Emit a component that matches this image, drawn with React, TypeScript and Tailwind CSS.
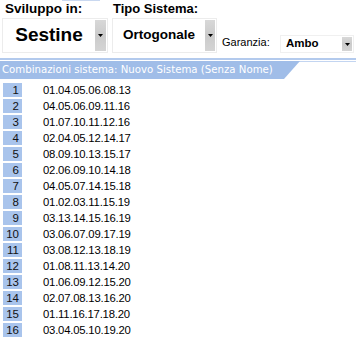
import React from "react";

const rows = [
  "01.04.05.06.08.13",
  "04.05.06.09.11.16",
  "01.07.10.11.12.16",
  "02.04.05.12.14.17",
  "08.09.10.13.15.17",
  "02.06.09.10.14.18",
  "04.05.07.14.15.18",
  "01.02.03.11.15.19",
  "03.13.14.15.16.19",
  "03.06.07.09.17.19",
  "03.08.12.13.18.19",
  "01.08.11.13.14.20",
  "01.06.09.12.15.20",
  "02.07.08.13.16.20",
  "01.11.16.17.18.20",
  "03.04.05.10.19.20",
];

function Arrow() {
  return (
    <svg width="5" height="3" viewBox="0 0 5 3" className="block">
      <polygon points="0,0 5,0 2.5,3" fill="#000" />
    </svg>
  );
}

function DropBtn({ w }: { w: string }) {
  return (
    <div
      className={`${w} flex items-center justify-center bg-gradient-to-b from-[#d8d8d8] via-[#cbcbcb] to-[#d4d4d4]`}
    >
      <Arrow />
    </div>
  );
}

export default function App() {
  const sans = { fontFamily: '"Liberation Sans", Arial, sans-serif' };
  return (
    <div className="w-[356px] h-[339px] bg-white overflow-hidden relative" style={sans}>
      <div className="absolute left-[62px] top-0 w-[38px] h-px bg-[#c9d8f0]" />
      {/* top controls */}
      <div className="flex h-[58px]">
        <div className="w-[110px] flex flex-col">
          <div className="pl-[5px] pt-[1px] h-[18px] text-[13.5px] font-bold leading-[16px] text-black">
            Sviluppo in:
          </div>
          <div className="ml-[2px] w-[106px] h-[35px] border border-[#ececec] flex">
            <div className="flex-1 flex items-center justify-center text-[19px] font-bold text-black">
              Sestine
            </div>
            <div className="py-px pr-px flex">
              <DropBtn w="w-[11px]" />
            </div>
          </div>
        </div>
        <div className="w-[110px] flex flex-col">
          <div className="pl-[3px] pt-[1px] h-[18px] text-[13px] font-bold leading-[16px] text-black">
            Tipo Sistema:
          </div>
          <div className="ml-[2px] w-[105px] h-[35px] border border-[#ececec] flex">
            <div className="flex-1 flex items-center justify-center text-[13.5px] font-bold text-black">
              Ortogonale
            </div>
            <div className="py-px pr-px flex">
              <DropBtn w="w-[10px]" />
            </div>
          </div>
        </div>
        <div className="flex-1 flex items-end pb-[5px]">
          <div className="pl-[2px] w-[60px] text-[11px] leading-[14px] pb-[4px] text-black">Garanzia:</div>
          <div className="w-[74px] h-[18px] border border-[#f0f0f0] flex">
            <div className="flex-1 flex items-center pl-[5px] text-[11.5px] font-bold text-black">Ambo</div>
            <div className="py-px pr-px flex">
              <DropBtn w="w-[10px]" />
            </div>
          </div>
        </div>
      </div>
      {/* blue line */}
      <div className="h-[2px] bg-[#b3caed]" />
      <div className="h-px" />
      {/* header tab */}
      <div className="relative h-[18px]">
        <div className="absolute left-0 right-0 top-0 h-px bg-[#c3d5f1]" />
        <div
          className="h-[18px] w-[300px] bg-[#a0bde8] flex items-center"
          style={{ clipPath: "polygon(0 0, 300px 0, 284px 100%, 0 100%)" }}
        >
          <span
            className="pl-[2px] text-[10.2px] text-white whitespace-nowrap"
            style={{ fontFamily: '"DejaVu Sans", Verdana, sans-serif' }}
          >
            Combinazioni sistema: Nuovo Sistema (Senza Nome)
          </span>
        </div>
      </div>
      {/* rows */}
      <div className="flex flex-col gap-[2px] pt-[4px]">
        {rows.map((r, i) => (
          <div key={i} className="flex h-[14px] items-center">
            <div className="ml-[3px] w-[19px] h-[14px] bg-[#a9c4ec] text-right pr-[3px] text-[11.5px] leading-[14px] text-[#111]">
              {i + 1}
            </div>
            <div className="ml-[21px] text-[11.3px] leading-[14px] text-black tracking-[-0.2px]">{r}</div>
          </div>
        ))}
      </div>
    </div>
  );
}
